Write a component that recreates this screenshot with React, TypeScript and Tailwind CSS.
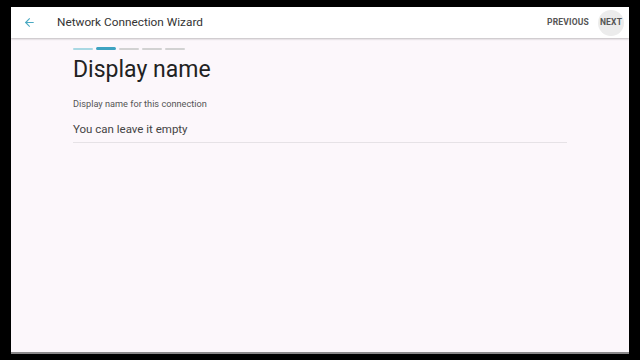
import { ArrowLeft } from 'lucide-react';

const STEPS = ['done', 'active', 'todo', 'todo', 'todo'];

export default function App() {
  return (
    <div className="w-[640px] h-[360px] bg-black pt-[7px] pl-[11px] font-['Roboto',sans-serif]">
      <div className="w-[618px] h-[347px] flex flex-col bg-[#fcf7fb] border-b-2 border-[#8a888a]">
        {/* Header */}
        <div className="h-[31px] bg-white flex items-center shadow-[0_1px_2px_rgba(0,0,0,0.25)] relative z-10">
          <ArrowLeft size={13} strokeWidth={2} className="ml-[12px] text-[#4aa9c2]" />
          <span className="ml-[21px] text-[11.8px] text-[#333]">Network Connection Wizard</span>
          <div className="ml-auto flex items-center mr-[5px]">
            <span className="text-[8.5px] font-bold text-[#555] tracking-[0.2px] mr-[9px]">PREVIOUS</span>
            <div className="w-[26px] h-[26px] rounded-full bg-[#ececec] flex items-center justify-center">
              <span className="text-[8.5px] font-bold text-[#555] tracking-[0.2px]">NEXT</span>
            </div>
          </div>
        </div>

        {/* Body */}
        <div className="flex-1 pl-[62px] pt-[9px] w-[556px]">
          <div className="flex items-center gap-[3px]">
            {STEPS.map((s, i) => (
              <div
                key={i}
                className={
                  s === 'active'
                    ? 'w-[20px] h-[3px] rounded-full bg-[#3ea3c1]'
                    : s === 'done'
                    ? 'w-[20px] h-[2px] rounded-full bg-[#a9d8e3]'
                    : 'w-[20px] h-[2px] rounded-full bg-[#d2d2d2]'
                }
              />
            ))}
          </div>
          <h1 className="mt-[6px] text-[23px] leading-[28px] text-[#222]">Display name</h1>
          <div className="mt-[14px] text-[9.2px] leading-[12px] text-[#555]">Display name for this connection</div>
          <div className="mt-[12px] text-[11.5px] leading-[14px] text-[#444] pb-[6px] border-b border-[#e6e2e6]">You can leave it empty</div>
        </div>
      </div>
    </div>
  );
}
